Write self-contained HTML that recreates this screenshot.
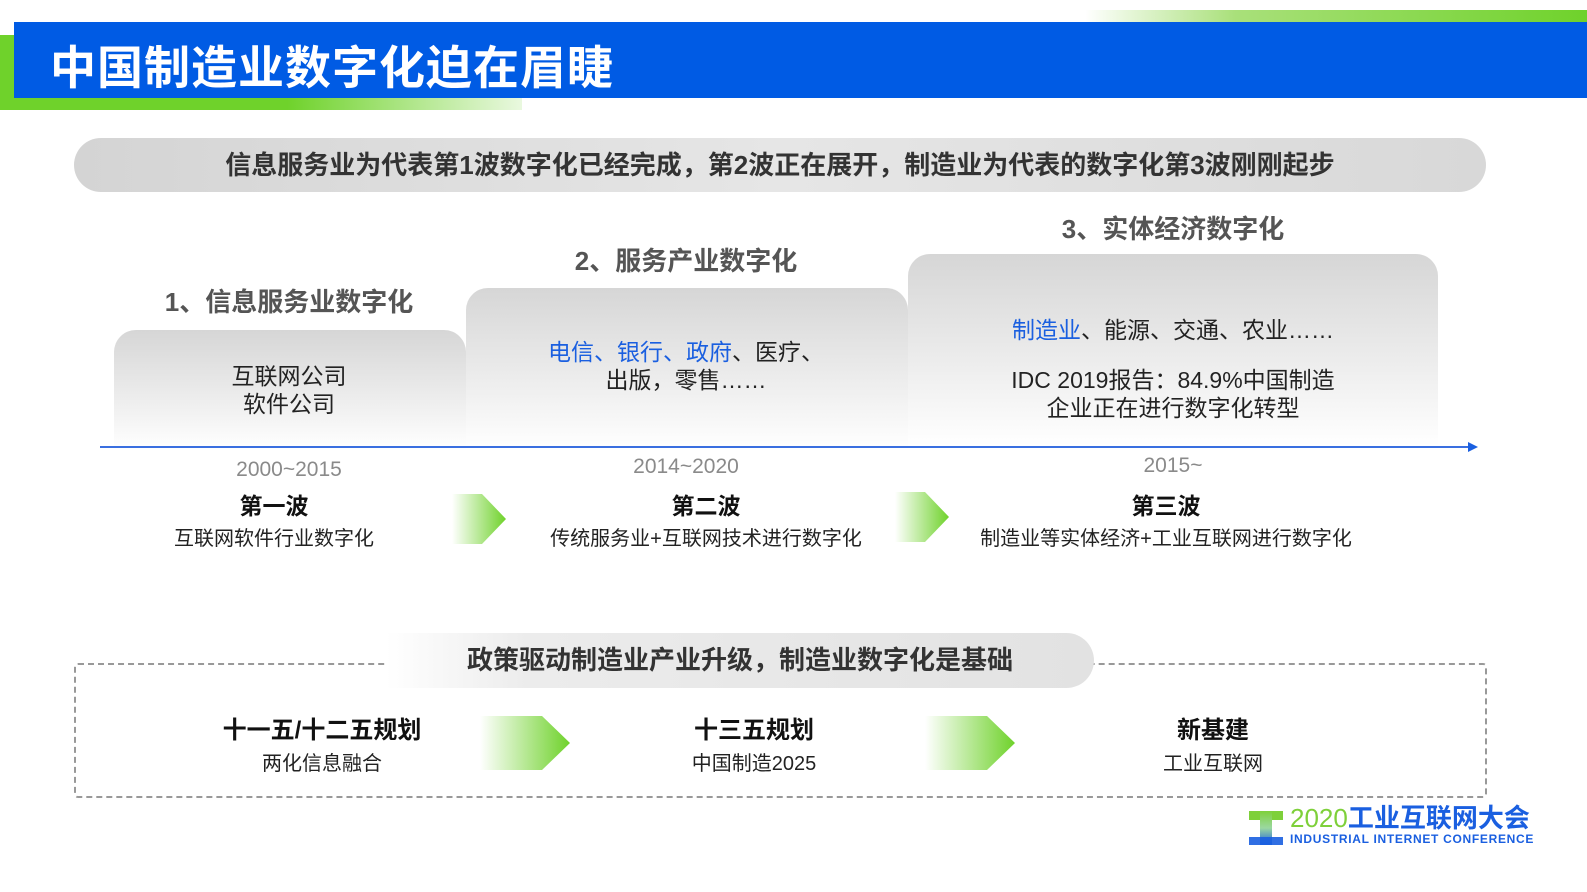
<!DOCTYPE html>
<html><head><meta charset="utf-8">
<style>
*{margin:0;padding:0;box-sizing:border-box}
body{width:1587px;height:892px;background:#fff;position:relative;overflow:hidden;font-family:"Liberation Sans","Noto Sans CJK SC",sans-serif;color:#222}
.a{position:absolute}
.c{text-align:center}
.box{position:absolute;border-radius:22px 22px 0 0;background:linear-gradient(#d6d6d6,#eeeeee 60%,#fff)}
.h{font-weight:bold;color:#555;font-size:26px}
.blue{color:#1a5fe0}
.t{font-size:23px;color:#222;line-height:28px}
.yr{font-size:21px;color:#8a8a8a}
.w{font-size:23px;font-weight:bold;color:#111}
.d{font-size:20px;color:#222}
.arr{position:absolute}
</style></head><body>
<div class="a" style="left:1085px;top:10px;width:502px;height:12px;background:linear-gradient(90deg,rgba(110,210,40,0),#a9e07a 30%,#6fd22b)"></div>
<div class="a" style="left:0;top:35px;width:522px;height:75px;background:linear-gradient(90deg,#6fd22b 0,#6fd22b 55%,rgba(110,210,40,0.15))"></div>
<div class="a" style="left:14px;top:22px;width:1573px;height:76px;background:#005be4"></div>
<div class="a" style="left:50px;top:32px;font-size:46px;font-weight:bold;color:#fff;letter-spacing:1px">中国制造业数字化迫在眉睫</div>

<div class="a c" style="left:74px;top:138px;width:1412px;height:54px;border-radius:27px;background:linear-gradient(90deg,#d4d4d4,#e6e6e6 50%,#d8d8d8);font-size:26px;font-weight:bold;color:#333;line-height:54px;white-space:nowrap">信息服务业为代表第1波数字化已经完成，第2波正在展开，制造业为代表的数字化第3波刚刚起步</div>

<div class="a h c" style="left:114px;top:282px;width:350px">1、信息服务业数字化</div>
<div class="a h c" style="left:466px;top:241px;width:440px">2、服务产业数字化</div>
<div class="a h c" style="left:908px;top:209px;width:530px">3、实体经济数字化</div>

<div class="box" style="left:114px;top:330px;width:352px;height:120px"></div>
<div class="box" style="left:466px;top:288px;width:442px;height:162px"></div>
<div class="box" style="left:908px;top:254px;width:530px;height:192px"></div>

<div class="a t c" style="left:114px;top:362px;width:350px">互联网公司<br>软件公司</div>
<div class="a t c" style="left:466px;top:338px;width:440px"><span class="blue">电信、银行、政府</span>、医疗、<br>出版，零售……</div>
<div class="a t c" style="left:908px;top:316px;width:530px"><span class="blue">制造业</span>、能源、交通、农业……</div>
<div class="a t c" style="left:908px;top:366px;width:530px">IDC 2019报告：84.9%中国制造<br>企业正在进行数字化转型</div>

<svg class="a" style="left:100px;top:440px" width="1390" height="16"><line x1="0" y1="7" x2="1372" y2="7" stroke="#3a6fe0" stroke-width="2"/><polygon points="1368,2 1378,7 1368,12" fill="#1a5fe0"/></svg>

<div class="a yr c" style="left:114px;top:458px;width:350px">2000~2015</div>
<div class="a yr c" style="left:466px;top:455px;width:440px">2014~2020</div>
<div class="a yr c" style="left:908px;top:454px;width:530px">2015~</div>

<div class="a w c" style="left:114px;top:487px;width:320px">第一波</div>
<div class="a w c" style="left:546px;top:487px;width:320px">第二波</div>
<div class="a w c" style="left:1006px;top:487px;width:320px">第三波</div>
<div class="a d c" style="left:114px;top:522px;width:320px">互联网软件行业数字化</div>
<div class="a d c" style="left:486px;top:522px;width:440px">传统服务业+互联网技术进行数字化</div>
<div class="a d c" style="left:926px;top:522px;width:480px">制造业等实体经济+工业互联网进行数字化</div>

<svg width="0" height="0" style="position:absolute"><defs><linearGradient id="g" x1="0" x2="1"><stop offset="0" stop-color="#6fd22b" stop-opacity="0"/><stop offset="1" stop-color="#6fd22b"/></linearGradient></defs></svg>
<svg class="arr" style="left:452px;top:494px" width="56" height="50"><polygon points="0,0 30,0 54,25 30,50 0,50" fill="url(#g)"/></svg>
<svg class="arr" style="left:895px;top:492px" width="56" height="50"><polygon points="0,0 30,0 54,25 30,50 0,50" fill="url(#g)"/></svg>

<div class="a" style="left:74px;top:663px;width:1413px;height:135px;border:2px dashed #999;border-radius:4px"></div>
<div class="a c" style="left:386px;top:633px;width:708px;height:55px;border-radius:0 28px 28px 0;background:linear-gradient(90deg,rgba(255,255,255,1),#ececec 20%,#e2e2e2);font-size:26px;font-weight:bold;color:#333;line-height:55px;padding-left:0px;white-space:nowrap">政策驱动制造业产业升级，制造业数字化是基础</div>

<div class="a w c" style="left:172px;top:710px;width:300px;font-size:24px">十一五/十二五规划</div>
<div class="a d c" style="left:172px;top:747px;width:300px">两化信息融合</div>
<div class="a w c" style="left:604px;top:710px;width:300px;font-size:24px">十三五规划</div>
<div class="a d c" style="left:604px;top:747px;width:300px">中国制造2025</div>
<div class="a w c" style="left:1063px;top:710px;width:300px;font-size:24px">新基建</div>
<div class="a d c" style="left:1063px;top:747px;width:300px">工业互联网</div>

<svg class="arr" style="left:480px;top:716px" width="92" height="54"><polygon points="0,0 62,0 90,27 62,54 0,54" fill="url(#g)"/></svg>
<svg class="arr" style="left:925px;top:716px" width="92" height="54"><polygon points="0,0 62,0 90,27 62,54 0,54" fill="url(#g)"/></svg>

<svg class="a" style="left:1249px;top:809px" width="36" height="38"><defs><linearGradient id="lg" x1="0" y1="0" x2="0" y2="1"><stop offset="0" stop-color="#7ed03a"/><stop offset="0.5" stop-color="#9bd8a0"/><stop offset="1" stop-color="#1a5fe0"/></linearGradient></defs><rect x="0" y="2" width="34" height="9" fill="#7ed03a"/><rect x="11" y="2" width="12" height="34" fill="url(#lg)"/><rect x="0" y="28" width="34" height="8" fill="#1a5fe0" opacity=".9"/></svg>
<div class="a" style="left:1290px;top:803px;font-size:26px;line-height:30px;white-space:nowrap"><span style="color:#7ed03a">2020</span><span style="color:#1a5fe0;font-weight:bold">工业互联网大会</span></div>
<div class="a" style="left:1290px;top:832px;font-size:12px;font-weight:bold;color:#1a5fe0;letter-spacing:0.7px;white-space:nowrap">INDUSTRIAL INTERNET CONFERENCE</div>
</body></html>
